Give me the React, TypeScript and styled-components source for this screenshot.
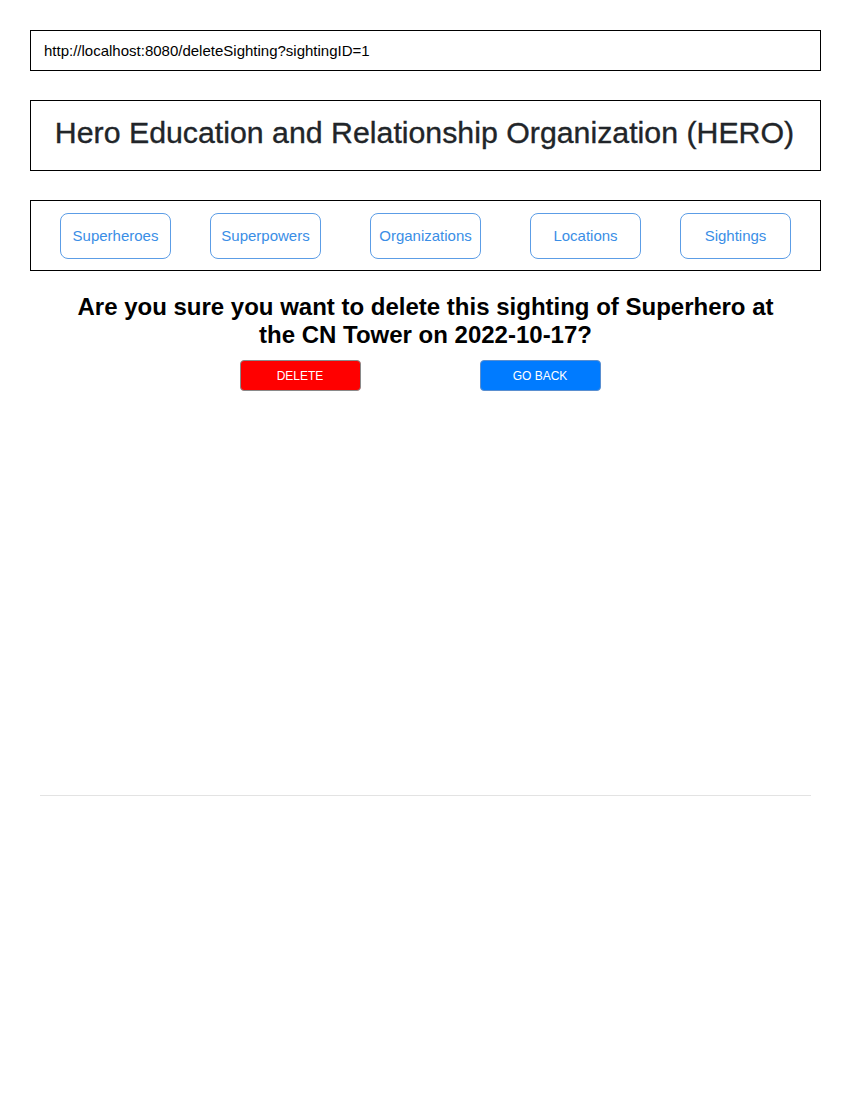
import React from "react";
import styled, { createGlobalStyle } from "styled-components";

const Global = createGlobalStyle`
  html, body { margin: 0; padding: 0; background: #fff; }
  body { font-family: "Liberation Sans", Arial, sans-serif; }
  * { box-sizing: border-box; }
`;

const Page = styled.div`
  padding: 30px 29px 0 30px;
  display: flex;
  flex-direction: column;
`;

const UrlBox = styled.div`
  border: 1px solid #000;
  height: 41px;
  display: flex;
  align-items: center;
  padding-left: 13px;
  font-size: 15px;
  color: #000;
`;

const TitleBox = styled.div`
  margin-top: 29px;
  border: 1px solid #000;
  height: 71px;
  display: flex;
  align-items: center;
  justify-content: center;
  padding: 0 2px 6px 0;
`;

const Title = styled.h1`
  margin: 0;
  font-size: 30.3px;
  font-weight: 400;
  color: #212529;
  -webkit-text-stroke: 0.35px #212529;
`;

const NavBox = styled.div`
  margin-top: 29px;
  border: 1px solid #000;
  height: 71px;
  display: flex;
  align-items: center;
  padding-left: 29px;
`;

const NavButton = styled.button<{ $gap: number }>`
  margin-left: ${(p) => p.$gap}px;
  width: 111px;
  height: 46px;
  border: 1px solid #5c9de6;
  border-radius: 8px;
  background: #fff;
  color: #3a8ee6;
  font-family: "Liberation Sans", Arial, sans-serif;
  font-size: 15px;
  padding: 0;
`;

const Question = styled.h2`
  margin: 22px auto 0;
  max-width: 720px;
  text-align: center;
  font-size: 24px;
  line-height: 28px;
  font-weight: 700;
  color: #000;
`;

const Actions = styled.div`
  margin-top: 11px;
  display: flex;
  justify-content: center;
  gap: 119px;
  padding-right: 11px;
`;

const ActionButton = styled.button<{ $bg: string; $border: string }>`
  width: 121px;
  height: 31px;
  border-radius: 4px;
  border: 1px solid ${(p) => p.$border};
  background: ${(p) => p.$bg};
  color: #fff;
  font-family: "Liberation Sans", Arial, sans-serif;
  font-size: 12px;
  padding: 0;
`;

const Rule = styled.hr`
  margin: 404px 10px 0 10px;
  border: 0;
  border-top: 1px solid #e3e3e3;
`;

const navItems: [string, number][] = [
  ["Superheroes", 0],
  ["Superpowers", 39],
  ["Organizations", 49],
  ["Locations", 49],
  ["Sightings", 39],
];

export default function App() {
  return (
    <>
      <Global />
      <Page>
        <UrlBox>http://localhost:8080/deleteSighting?sightingID=1</UrlBox>
        <TitleBox>
          <Title>Hero Education and Relationship Organization (HERO)</Title>
        </TitleBox>
        <NavBox>
          {navItems.map(([label, gap]) => (
            <NavButton key={label} $gap={gap}>
              {label}
            </NavButton>
          ))}
        </NavBox>
        <Question>
          Are you sure you want to delete this sighting of Superhero at the CN Tower on 2022-10-17?
        </Question>
        <Actions>
          <ActionButton $bg="#ff0000" $border="#8a8a8a">DELETE</ActionButton>
          <ActionButton $bg="#007bff" $border="#5a8fd0">GO BACK</ActionButton>
        </Actions>
        <Rule />
      </Page>
    </>
  );
}
